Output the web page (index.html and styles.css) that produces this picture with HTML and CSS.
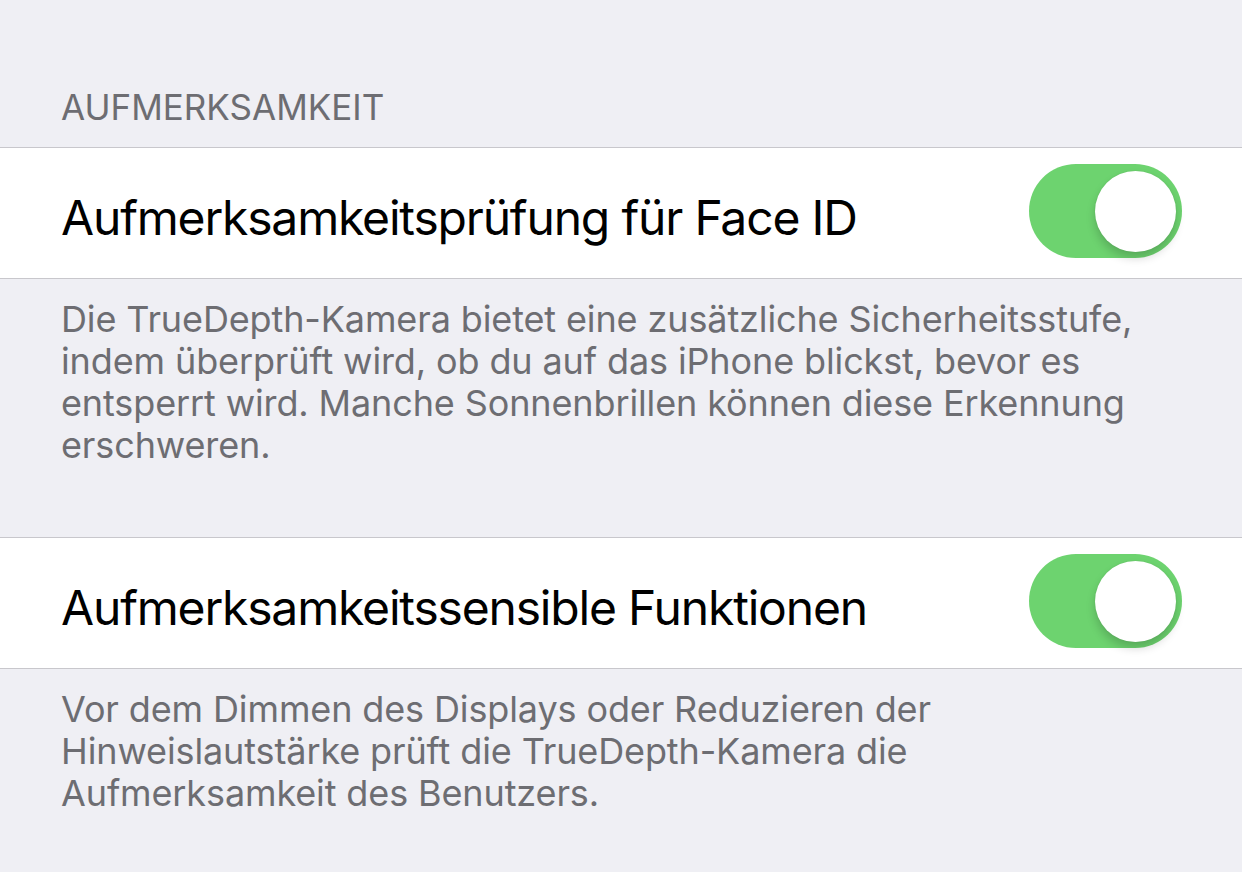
FILE: index.html
```html
<!DOCTYPE html>
<html lang="de">
<head>
<meta charset="utf-8">
<link rel="stylesheet" href="styles.css">
</head>
<body>
<main class="settings">
  <div class="group-header">AUFMERKSAMKEIT</div>
  <div class="cell">
    <span class="cell-title">Aufmerksamkeitsprüfung für Face ID</span>
    <span class="toggle"><span class="knob"></span></span>
  </div>
  <p class="group-footer">Die TrueDepth-Kamera bietet eine zusätzliche Sicherheitsstufe,<br>indem überprüft wird, ob du auf das iPhone blickst, bevor es<br>entsperrt wird. Manche Sonnenbrillen können diese Erkennung<br>erschweren.</p>
  <div class="cell">
    <span class="cell-title">Aufmerksamkeitssensible Funktionen</span>
    <span class="toggle"><span class="knob"></span></span>
  </div>
  <p class="group-footer">Vor dem Dimmen des Displays oder Reduzieren der<br>Hinweislautstärke prüft die TrueDepth-Kamera die<br>Aufmerksamkeit des Benutzers.</p>
</main>
</body>
</html>
```
FILE: styles.css
```css
html, body {
  margin: 0;
  padding: 0;
  background: #efeff4;
}
body {
  font-family: Inter, "Noto Sans", "Liberation Sans", sans-serif;
  width: 1242px;
  height: 872px;
  overflow: hidden;
}
.settings {
  display: flex;
  flex-direction: column;
}
.group-header {
  padding: 86px 61px 19px;
  font-size: 35px;
  line-height: 42px;
  color: #6d6d72;
}
.cell {
  display: flex;
  align-items: center;
  justify-content: space-between;
  height: 130px;
  padding: 0 60px 0 61px;
  background: #fff;
  border-top: 1px solid #c8c7cc;
  border-bottom: 1px solid #c8c7cc;
}
.cell-title {
  padding-top: 8px;
  font-size: 48px;
  letter-spacing: -1.18px;
  color: #000;
}
.toggle {
  display: flex;
  align-items: center;
  justify-content: flex-end;
  box-sizing: border-box;
  width: 153px;
  height: 94px;
  margin-bottom: 4px;
  padding: 0 6px;
  border-radius: 47px;
  background: #6dd36f;
}
.knob {
  width: 81px;
  height: 81px;
  border-radius: 50%;
  background: #fff;
  box-shadow: 0 6px 10px rgba(0, 0, 0, 0.18), 0 0 2px rgba(0, 0, 0, 0.08);
}
.group-footer {
  margin: 0;
  padding: 19px 61px 71px;
  font-size: 36px;
  line-height: 42px;
  letter-spacing: -0.12px;
  color: #6d6d72;
}
```
